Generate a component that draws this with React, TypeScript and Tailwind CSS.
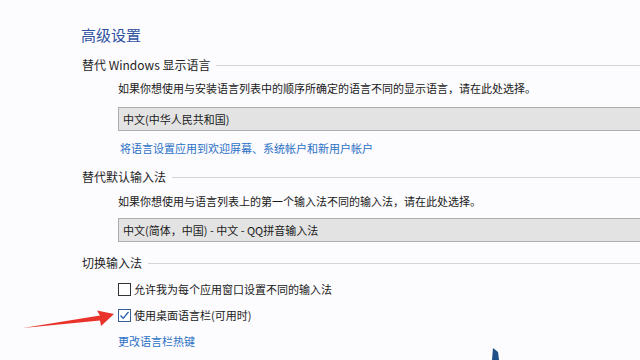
import React from "react";

const font = { fontFamily: '"Microsoft YaHei", "Noto Sans CJK SC", sans-serif' };

const SectionHeader: React.FC<{ label: string; className?: string }> = ({ label, className }) => (
  <div className={`flex items-center h-5 pl-[82px] ${className ?? ""}`}>
    <span className="text-[12px] text-[#1e1e1e] whitespace-nowrap">{label}</span>
    <div className="flex-1 h-px bg-[#d4d4d4] ml-[6px]" />
  </div>
);

const Dropdown: React.FC<{ value: string; className?: string }> = ({ value, className }) => (
  <div
    className={`ml-[118px] h-6 flex items-center pl-[4px] bg-[#e3e3e3] border border-r-0 border-[#adadad] text-[11px] text-[#1a1a1a] ${className ?? ""}`}
  >
    {value}
  </div>
);

const Checkbox: React.FC<{ checked?: boolean; label: string; className?: string }> = ({ checked, label, className }) => (
  <div className={`flex items-center h-4 pl-[118px] ${className ?? ""}`}>
    <div
      className={`w-[13px] h-[13px] border bg-white flex items-center justify-center ${
        checked ? "border-[#3b5f94]" : "border-[#333333]"
      }`}
    >
      {checked && (
        <svg width="11" height="11" viewBox="0 0 11 11">
          <path d="M1.5 5.5 L4.2 8.3 L9.5 2" fill="none" stroke="#2a5fa8" strokeWidth="1.3" />
        </svg>
      )}
    </div>
    <span className="ml-[3px] text-[11px] text-[#1a1a1a]">{label}</span>
  </div>
);

export default function App() {
  return (
    <div className="relative w-[640px] h-[360px] overflow-hidden bg-[#fcfbfd]" style={font}>
      <div className="flex flex-col pt-[25px]">
        <div className="h-5 flex items-center pl-[81px] text-[15px] text-[#2f52a0]">高级设置</div>

        <SectionHeader label="替代 Windows 显示语言" className="mt-[10px]" />
        <div className="h-4 flex items-center pl-[118px] mt-[5px] text-[11px] text-[#1a1a1a]">
          如果你想使用与安装语言列表中的顺序所确定的语言不同的显示语言，请在此处选择。
        </div>
        <Dropdown value="中文(中华人民共和国)" className="mt-[11px]" />
        <div className="h-4 flex items-center pl-[120px] mt-[9px] text-[11px] text-[#2b71c6]">
          将语言设置应用到欢迎屏幕、系统帐户和新用户帐户
        </div>

        <SectionHeader label="替代默认输入法" className="mt-[11px]" />
        <div className="h-4 flex items-center pl-[118px] mt-[6px] text-[11px] text-[#1a1a1a]">
          如果你想使用与语言列表上的第一个输入法不同的输入法，请在此处选择。
        </div>
        <Dropdown value="中文(简体，中国) - 中文 - QQ拼音输入法" className="mt-[9px]" />

        <SectionHeader label="切换输入法" className="mt-[11px]" />
        <Checkbox label="允许我为每个应用窗口设置不同的输入法" className="mt-[8px]" />
        <Checkbox checked label="使用桌面语言栏(可用时)" className="mt-[10px]" />
        <div className="h-4 flex items-center pl-[118px] mt-[10px] text-[11px] text-[#2b71c6]">
          更改语言栏热键
        </div>
      </div>

      {/* red annotation arrow */}
      <svg className="absolute left-[20px] top-[300px]" width="100" height="35" viewBox="0 0 100 35">
        <polygon points="3,28 80,15.5 77,10.5 94,14 81,26 80,20.5" fill="#e8322a" />
      </svg>

      {/* cursor blob at bottom */}
      <svg className="absolute left-[490px] top-[346px]" width="14" height="14" viewBox="0 0 14 14">
        <path d="M3 2 L8 6 L9 14 L2 14 Z" fill="#1e4f86" />
      </svg>
    </div>
  );
}
